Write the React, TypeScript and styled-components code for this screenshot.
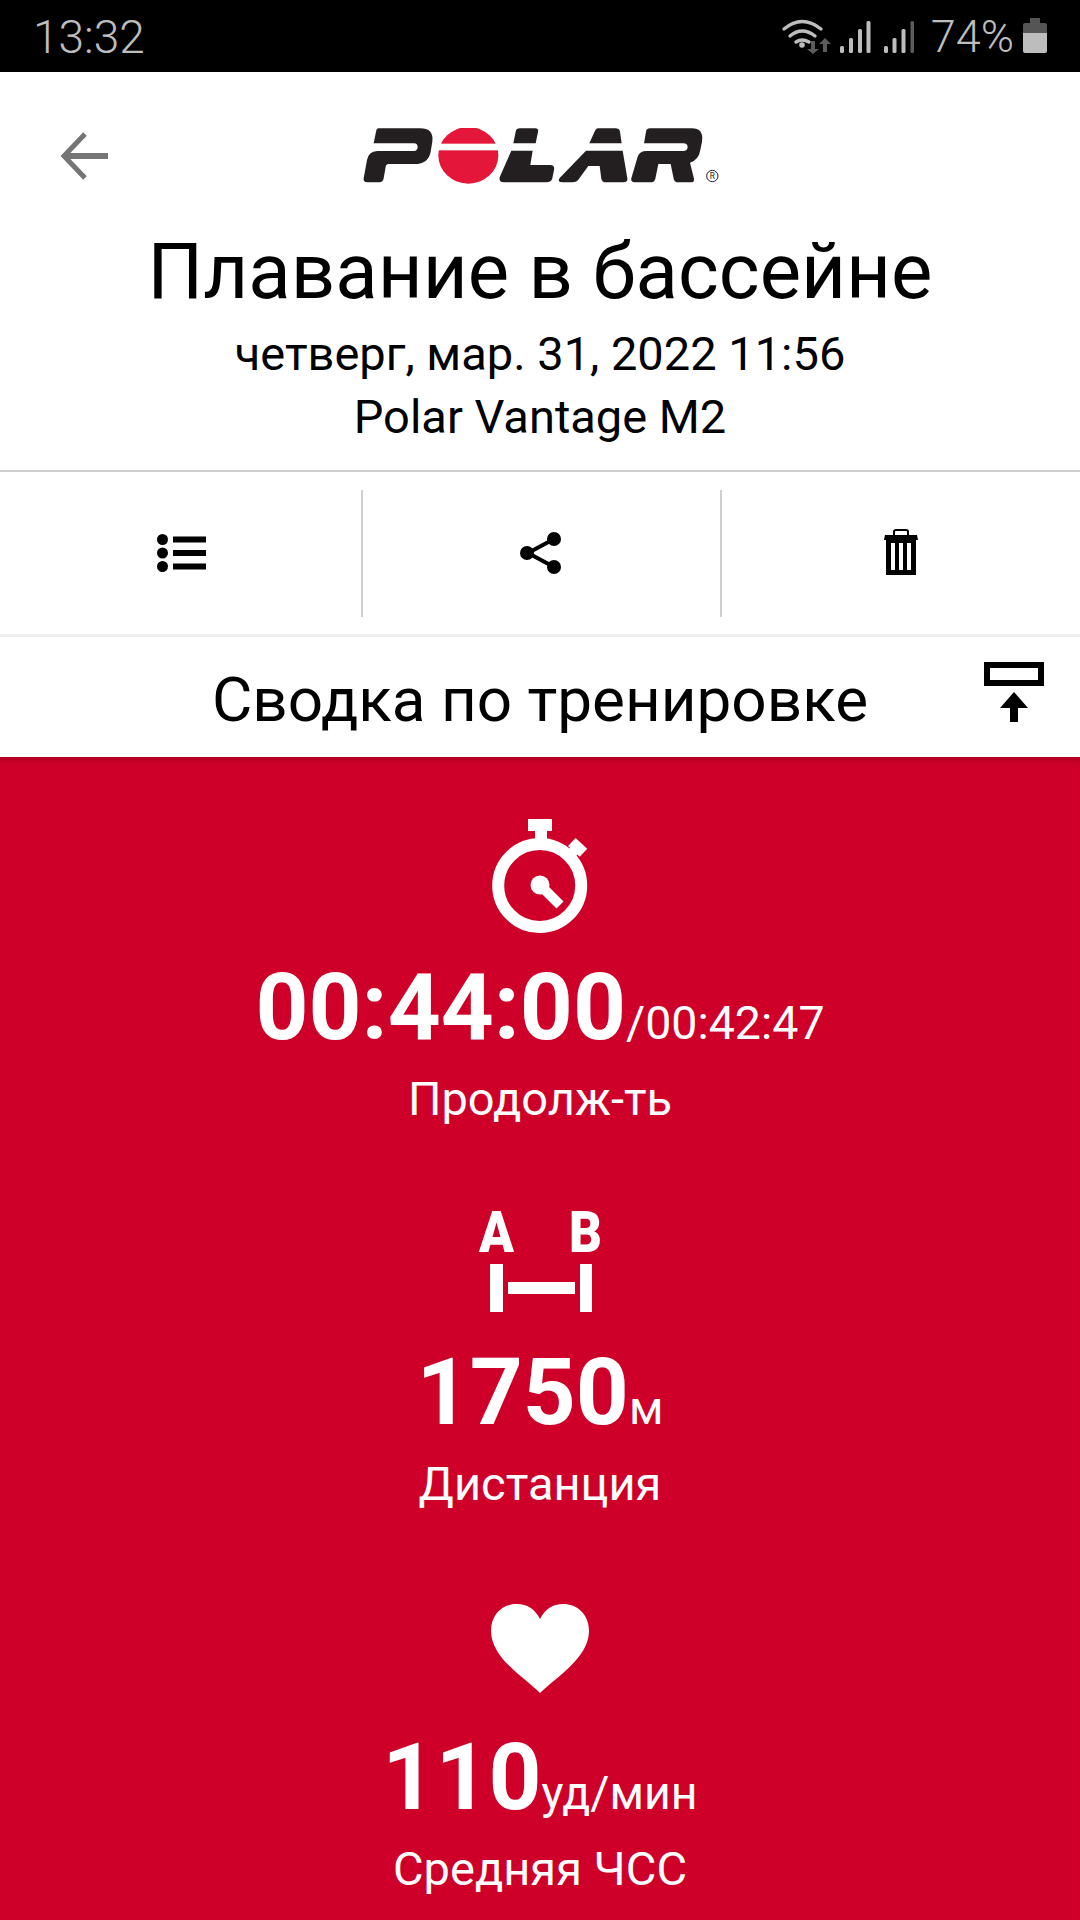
import React from "react";
import styled, { createGlobalStyle } from "styled-components";

const Global = createGlobalStyle`
  html, body { margin: 0; padding: 0; background: #fff; }
  body { width: 1080px; height: 1920px; overflow: hidden; font-family: Roboto, "Noto Sans", sans-serif; }
`;
const Page = styled.div`width: 1080px; height: 1920px; display: flex; flex-direction: column; overflow: hidden;`;
const StatusBar = styled.div`
  flex: none; height: 72px; background: #000; color: #bdbdbd; display: flex; align-items: center;
  justify-content: space-between; padding: 2px 33px 0 33px; box-sizing: border-box; font-weight: 300;
`;
const Clock = styled.span`font-size: 46px; line-height: 70px;`;
const StatusRight = styled.div`display: flex; align-items: center; margin-top: -2px;`;
const Percent = styled.span`font-size: 45px; line-height: 72px; margin: 2px 9px 0 12px;`;
const Header = styled.header`flex: none; height: 398px; box-sizing: border-box; padding-top: 56px; display: flex; flex-direction: column;`;
const LogoRow = styled.div`display: grid; grid-template-columns: 1fr auto 1fr; align-items: center; height: 60px;`;
const BackIcon = styled.svg`width: 50px; height: 48px; margin: 0 0 5px 59px;`;
const Title = styled.h1`margin: 43px 0 9px; text-align: center; font-weight: 400; font-size: 78px; line-height: 82px; color: #000;`;
const Sub = styled.div`text-align: center; font-size: 47px; line-height: 63px; color: #000;`;
const Rule = styled.div<{ $h: number; $c: string }>`height: ${p => p.$h}px; background: ${p => p.$c}; flex: none;`;
const Actions = styled.div`flex: none; height: 162px; display: grid; grid-template-columns: 361px 359px 360px; align-items: center;`;
const Action = styled.div<{ $sep?: boolean }>`
  height: 127px; display: flex; align-items: center; justify-content: center;
  ${p => p.$sep ? "border-left: 2px solid #cfcfcf;" : ""}
`;
const ListIcon = styled.svg`width: 50px; height: 38px; margin-left: 2px;`;
const ShareIcon = styled.svg`width: 42px; height: 42px; margin-right: 2px;`;
const TrashIcon = styled.svg`width: 36px; height: 46px; margin: 0 1px 3px 0;`;
const SummaryRow = styled.div`
  flex: none; height: 120px; box-sizing: border-box; padding-top: 5px;
  display: grid; grid-template-columns: 1fr auto 1fr; align-items: center;
`;
const SummaryTitle = styled.div`font-size: 62px; line-height: 115px; color: #000; white-space: nowrap;`;
const ExportIcon = styled.svg`justify-self: end; width: 60px; height: 62px; margin: -14px 36px 0 0;`;
const Panel = styled.main`
  flex: 1; min-height: 0; background: #ce0029; color: #fff; box-shadow: inset 0 7px 7px -5px rgba(0,0,0,.22);
  padding-top: 53px; display: flex; flex-direction: column; align-items: center; gap: 66px;
`;
const Stat = styled.section`width: 100%; display: flex; flex-direction: column; align-items: center;`;
const IconBox = styled.div`height: 132px; display: flex; align-items: center; justify-content: center;`;
const Value = styled.div`display: flex; align-items: baseline; justify-content: center; height: 106px; line-height: 106px; margin-top: 13px;`;
const Big = styled.span`font-size: 92.5px; font-weight: 700;`;
const Unit = styled.span`font-size: 46.5px; font-weight: 400;`;
const Label = styled.div`font-size: 47px; line-height: 60px; margin-top: 8px;`;
const DistanceIcon = styled.svg`flex: none; width: 140px; height: 138px;`;
const HeartIcon = styled.svg`width: 98px; height: 89px; margin-top: 5px;`;

const Logo = () => (
  <svg width="360" height="60" viewBox="60 84 1080 180">
    <g fill="#231f20">
      <path d="M116 85H240Q282 85 277 125L272 155Q265 192 225 192H146Q138 192 137 200L131 235Q129 247 118 247H82Q69 247 71 235L81 180Q85 155 112 153H222Q232 153 233 142Q233 130 222 130H101L108 95Q110 85 116 85Z" />
      <path d="M540 85H585Q597 85 594 96L587 130H520L527 95Q529 85 540 85Z" />
      <path d="M514 152H578L571 195H630Q645 195 642 210L637 235Q634 247 620 247H492Q476 247 479 232Z" />
      <path d="M775 85H826Q838 85 840 95L845 130H748L765 92Q768 85 775 85Z" />
      <path d="M738 152H848L862 235Q864 247 850 247H798Q786 247 784 236L779 198H745L716 238Q710 247 698 247H668Q650 247 659 234Z" />
      <path d="M930 85H1055Q1092 85 1086 125L1081 150Q1076 180 1050 188L1062 236Q1064 247 1052 247H1015Q1003 247 1001 236L992 192H955L946 236Q944 247 930 247H885Q871 247 874 235L893 170Q898 153 920 153H1030Q1042 153 1043 142Q1043 130 1030 130H912L918 95Q920 85 930 85Z" />
    </g>
    <ellipse cx="385" cy="166" rx="90" ry="85" fill="#e4173a" />
    <rect x="290" y="131" width="190" height="20" fill="#fff" />
    <circle cx="1117" cy="228" r="17" fill="none" stroke="#231f20" strokeWidth="3" />
    <text x="1117" y="237" fontSize="25" textAnchor="middle" fontFamily="Roboto" fill="#231f20">R</text>
  </svg>
);

const Wifi = () => (
  <svg width="140" height="72" viewBox="780 0 140 72">
    <g fill="none" stroke="#bdbdbd" strokeWidth="3.4" strokeLinecap="round">
      <path d="M785 29Q803 14 822 29" />
      <path d="M791 36Q803 26 816 36" />
      <path d="M797 42Q803 38 810 42" />
    </g>
    <circle cx="803" cy="45" r="2.8" fill="#bdbdbd" />
    <path d="M812 41H816V49H820L814 54L808 49H812Z" fill="#5c5c5c" />
    <path d="M824 52H828V44H832L826 38L820 44H824Z" fill="#5c5c5c" />
    <g fill="#bdbdbd">
      <rect x="841" y="46" width="4" height="7" rx="1.5" /><rect x="850" y="38" width="4" height="15" rx="1.5" />
      <rect x="859" y="29" width="4" height="24" rx="1.5" /><rect x="867.5" y="21" width="4" height="32" rx="1.5" />
      <rect x="885" y="46" width="4" height="7" rx="1.5" /><rect x="893.5" y="38" width="4" height="15" rx="1.5" />
      <rect x="902.5" y="29" width="4" height="24" rx="1.5" />
    </g>
    <rect x="911.5" y="21" width="3.5" height="32" rx="1.5" fill="#5c5c5c" />
  </svg>
);

const Battery = () => (
  <svg width="24" height="36" viewBox="0 0 24 36">
    <path d="M7 0H17V5H22Q24 5 24 7V15H0V7Q0 5 2 5H7Z" fill="#555" />
    <path d="M0 15H24V33Q24 35 22 35H2Q0 35 0 33Z" fill="#bdbdbd" />
  </svg>
);

const Stopwatch = () => (
  <svg width="100" height="116" viewBox="50 17 100 116">
    <g fill="#fff">
      <rect x="88" y="18" width="24" height="12" />
      <rect x="95" y="29" width="12" height="12" />
      <rect x="130" y="41" width="16" height="11" transform="rotate(43 138 46)" />
      <rect x="128" y="46" width="10" height="10" transform="rotate(43 133 51)" />
      <circle cx="100" cy="84" r="9.5" />
    </g>
    <circle cx="99.7" cy="84.5" r="41.5" fill="none" stroke="#fff" strokeWidth="12" />
    <path d="M100 84L120 104" stroke="#fff" strokeWidth="10" />
  </svg>
);

const Distance = () => (
  <DistanceIcon viewBox="470 1190 140 138">
    <text x="479" y="1250" fontFamily="Roboto" fontWeight="900" fontSize="58" fill="#fff" textLength="35" lengthAdjust="spacingAndGlyphs">A</text>
    <text x="569" y="1250" fontFamily="Roboto" fontWeight="900" fontSize="58" fill="#fff" textLength="33" lengthAdjust="spacingAndGlyphs">B</text>
    <g fill="#fff">
      <rect x="490" y="1262" width="13" height="48" />
      <rect x="508" y="1280" width="67" height="12" />
      <rect x="580" y="1262" width="12" height="48" />
    </g>
  </DistanceIcon>
);

const Heart = () => (
  <HeartIcon viewBox="0 0 98 89">
    <path d="M49 89C34 74 0 54 0 27C0 10 12 0 26 0C36 0 44 5 49 15C54 5 62 0 72 0C86 0 98 10 98 27C98 54 64 74 49 89Z" fill="#fff" />
  </HeartIcon>
);

export default function App() {
  return (
    <Page>
      <Global />
      <StatusBar>
        <Clock>13:32</Clock>
        <StatusRight><Wifi /><Percent>74%</Percent><Battery /></StatusRight>
      </StatusBar>
      <Header>
        <LogoRow>
          <BackIcon viewBox="0 0 50 48">
            <path d="M26 2L5 24L26 46" fill="none" stroke="#757575" strokeWidth="5" />
            <path d="M5 24H49" fill="none" stroke="#757575" strokeWidth="6" />
          </BackIcon>
          <Logo />
          <span />
        </LogoRow>
        <Title>Плавание в бассейне</Title>
        <Sub>четверг, мар. 31, 2022 11:56</Sub>
        <Sub>Polar Vantage M2</Sub>
      </Header>
      <Rule $h={2} $c="#cfcfcf" />
      <Actions>
        <Action>
          <ListIcon viewBox="0 0 50 38">
            <g fill="#000"><circle cx="5.5" cy="5.5" r="5.5" /><circle cx="5.5" cy="19" r="5.5" /><circle cx="5.5" cy="32.5" r="5.5" />
              <rect x="16" y="2.5" width="33" height="6" /><rect x="16" y="16" width="33" height="6" /><rect x="16" y="29.5" width="33" height="6" /></g>
          </ListIcon>
        </Action>
        <Action $sep>
          <ShareIcon viewBox="0 0 42 42">
            <path d="M8 21L34 7M8 21L34 35" stroke="#000" strokeWidth="4" />
            <g fill="#000"><circle cx="7" cy="21" r="7" /><circle cx="34" cy="7" r="7" /><circle cx="34" cy="35" r="7" /></g>
          </ShareIcon>
        </Action>
        <Action $sep>
          <TrashIcon viewBox="0 0 36 46">
            <path d="M11 6V2.5Q11 1 13 1H23Q25 1 25 2.5V6" fill="none" stroke="#000" strokeWidth="2" />
            <path d="M2 6H34L35 11H1Z" fill="#000" />
            <path fillRule="evenodd" d="M3 11H33V46H3ZM8 14V41H12V14ZM16 14V41H20V14ZM24 14V41H28V14Z" fill="#000" />
          </TrashIcon>
        </Action>
      </Actions>
      <Rule $h={3} $c="#f0f0f0" />
      <SummaryRow>
        <span />
        <SummaryTitle>Сводка по тренировке</SummaryTitle>
        <ExportIcon viewBox="0 0 60 62">
          <rect x="3" y="3" width="54" height="18" fill="none" stroke="#000" strokeWidth="6" />
          <path d="M30 30L44 46H34V60H26V46H16Z" fill="#000" />
        </ExportIcon>
      </SummaryRow>
      <Panel>
        <Stat>
          <IconBox><Stopwatch /></IconBox>
          <Value><Big>00:44:00</Big><Unit>/00:42:47</Unit></Value>
          <Label>Продолж-ть</Label>
        </Stat>
        <Stat>
          <IconBox><Distance /></IconBox>
          <Value><Big>1750</Big><Unit>м</Unit></Value>
          <Label>Дистанция</Label>
        </Stat>
        <Stat>
          <IconBox><Heart /></IconBox>
          <Value><Big>110</Big><Unit>уд/мин</Unit></Value>
          <Label>Средняя ЧСС</Label>
        </Stat>
      </Panel>
    </Page>
  );
}
